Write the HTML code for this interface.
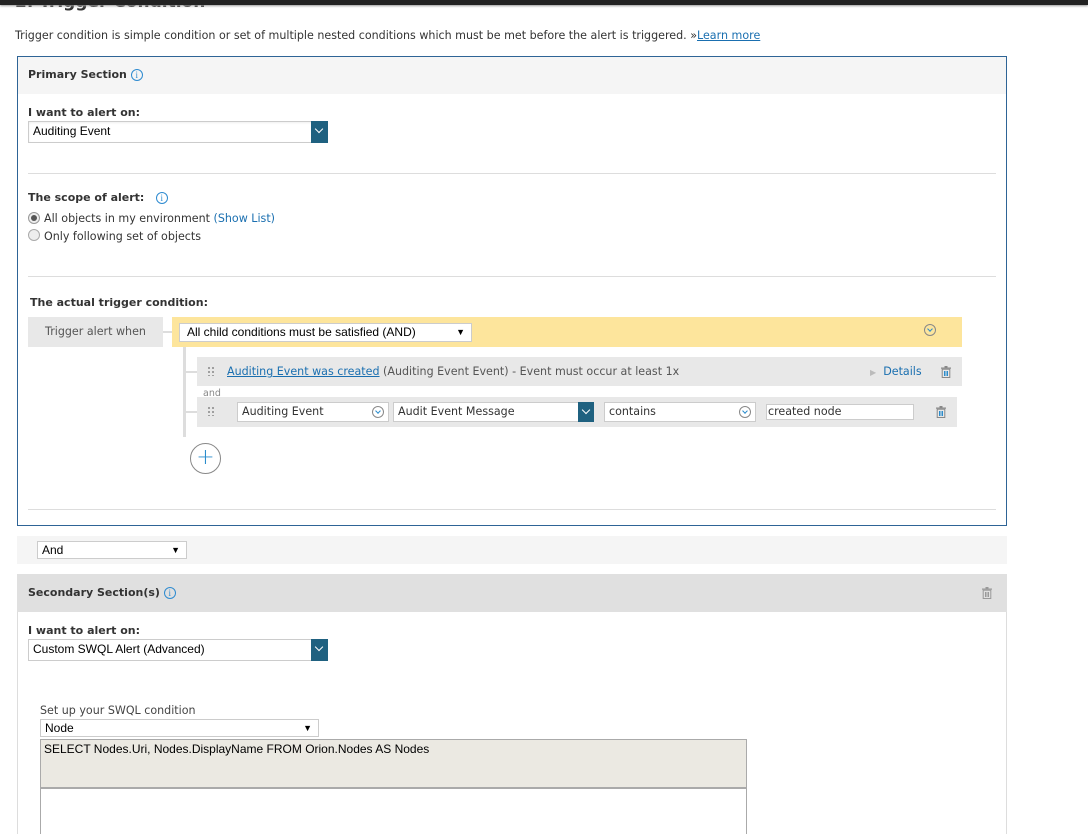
<!DOCTYPE html>
<html><head><meta charset="utf-8"><style>
*{box-sizing:border-box;margin:0;padding:0}
html,body{width:1088px;height:834px;overflow:hidden}
body{position:relative;background:#fff;font-family:"DejaVu Sans","Liberation Sans",sans-serif;font-size:11.5px;color:#333}
.a{position:absolute;white-space:nowrap}
.b{font-weight:bold;font-size:11px;color:#333}
.sel{position:absolute;background:#fff;border:1px solid #ccc;font-family:"Liberation Sans",sans-serif;font-size:12px;color:#000;padding:2px 4px;white-space:nowrap}
.dd{position:absolute;right:-1px;top:-1px;bottom:-1px;width:17px;background:#1f6180}
.dd:after{content:"";position:absolute;left:5px;top:5px;width:5px;height:5px;border-right:1px solid #fff;border-bottom:1px solid #fff;transform:rotate(45deg)}
.tri{position:absolute;right:6px;top:3px;font-size:9px}
.info{display:inline-block;width:12px;height:12px;border:1px solid #2e8bd0;border-radius:50%;color:#2e8bd0;font-size:9px;line-height:10px;text-align:center;font-family:"Liberation Serif",serif;vertical-align:middle;font-weight:normal}
.hr{position:absolute;left:28px;width:968px;height:1px;background:#ddd}
.cc{position:absolute;right:4px;top:3px;width:12px;height:12px;border:1px solid #888;border-radius:50%}
.cc:after{content:"";position:absolute;left:3px;top:2px;width:3px;height:3px;border-right:1px solid #2a8ccc;border-bottom:1px solid #2a8ccc;transform:rotate(45deg)}
.trash{position:absolute;width:10px;height:12px}
.grip{position:absolute;width:8px;height:10px;background-image:radial-gradient(circle,#999 1px,transparent 1.2px);background-size:4px 4px}
.t{font-size:11.1px}
</style></head><body>
<div class="a" style="left:15px;top:-8px;font-size:17px;font-weight:bold;color:#333">2. Trigger Condition</div>
<div class="a" style="left:0;top:0;width:1088px;height:5px;background:#222;box-shadow:0 1px 2px #999"></div>
<div class="a t" style="left:15px;top:29px">Trigger condition is simple condition or set of multiple nested conditions which must be met before the alert is triggered. »<span style="color:#1a6fb0;text-decoration:underline">Learn more</span></div>

<div class="a" style="left:17px;top:56px;width:990px;height:470px;border:1px solid #2e6496"></div>
<div class="a" style="left:18px;top:57px;width:988px;height:37px;background:#f5f5f5"></div>
<div class="a b" style="left:28px;top:68px">Primary Section <span class="info">i</span></div>
<div class="a b" style="left:28px;top:106px">I want to alert on:</div>
<div class="sel" style="left:28px;top:121px;width:300px;height:22px;box-shadow:inset 0 1px 2px #eee">Auditing Event<div class="dd"></div></div>
<div class="hr" style="top:173px"></div>
<div class="a b" style="left:28px;top:191px">The scope of alert: &nbsp;&nbsp;<span class="info">i</span></div>
<div class="a" style="left:28px;top:212px;width:12px;height:12px;border:1px solid #999;border-radius:50%;background:#eee"><div style="margin:2px;width:6px;height:6px;border-radius:50%;background:#555"></div></div>
<div class="a t" style="left:44px;top:212px">All objects in my environment <span style="color:#1a6fb0">(Show List)</span></div>
<div class="a" style="left:28px;top:229px;width:12px;height:12px;border:1px solid #aaa;border-radius:50%;background:#eee"></div>
<div class="a t" style="left:44px;top:230px">Only following set of objects</div>
<div class="hr" style="top:276px"></div>
<div class="a b" style="left:30px;top:296px">The actual trigger condition:</div>
<div class="a t" style="left:28px;top:317px;width:135px;height:30px;background:#e8e8e8;text-align:center;line-height:30px;color:#555">Trigger alert when</div>
<div class="a" style="left:163px;top:331px;width:10px;height:2px;background:#ddd"></div>
<div class="a" style="left:172px;top:317px;width:790px;height:30px;background:#fde59c"></div>
<div class="sel" style="left:179px;top:323px;width:293px;height:19px;padding:1px 7px">All child conditions must be satisfied (AND)<span class="tri">▼</span></div>
<div class="cc" style="left:924px;top:324px;right:auto"></div>
<div class="a" style="left:183px;top:347px;width:3px;height:90px;background:#ddd"></div>
<div class="a" style="left:186px;top:371px;width:11px;height:2px;background:#ddd"></div>
<div class="a" style="left:186px;top:411px;width:11px;height:2px;background:#ddd"></div>
<div class="a" style="left:197px;top:357px;width:765px;height:29px;background:#e8e8e8"></div>
<div class="grip" style="left:207px;top:366px"></div>
<div class="a t" style="left:227px;top:365px;color:#555"><span style="color:#1a6fb0;text-decoration:underline">Auditing Event was created</span> (Auditing Event Event) - Event must occur at least 1x</div>
<div class="a t" style="left:870px;top:365px;color:#1a6fb0"><span style="color:#bbb;font-size:8px">▶</span> &nbsp;Details</div>
<svg class="trash" style="left:941px;top:366px" viewBox="0 0 10 12"><rect x="0" y="1.5" width="10" height="1.2" fill="#888"/><rect x="3.5" y="0" width="3" height="1.5" fill="#888"/><rect x="1.2" y="3.2" width="7.6" height="8.3" fill="none" stroke="#888"/><path d="M3.5 5v5M5 5v5M6.5 5v5" stroke="#2a8ccc"/></svg>
<div class="a" style="left:203px;top:388px;font-size:9.5px;color:#888">and</div>
<div class="a" style="left:197px;top:397px;width:760px;height:30px;background:#e8e8e8"></div>
<div class="grip" style="left:207px;top:406px"></div>
<div class="sel t" style="left:237px;top:402px;width:152px;height:20px;font-family:'DejaVu Sans',sans-serif;color:#333">Auditing Event<div class="cc"></div></div>
<div class="sel t" style="left:393px;top:402px;width:201px;height:20px;font-family:'DejaVu Sans',sans-serif;color:#333">Audit Event Message<div class="dd" style="width:16px"></div></div>
<div class="sel t" style="left:604px;top:402px;width:152px;height:20px;font-family:'DejaVu Sans',sans-serif;color:#333">contains<div class="cc"></div></div>
<div class="sel t" style="left:766px;top:404px;width:148px;height:16px;padding:0 1px;font-family:'DejaVu Sans',sans-serif;color:#333">created node</div>
<svg class="trash" style="left:936px;top:406px" viewBox="0 0 10 12"><rect x="0" y="1.5" width="10" height="1.2" fill="#888"/><rect x="3.5" y="0" width="3" height="1.5" fill="#888"/><rect x="1.2" y="3.2" width="7.6" height="8.3" fill="none" stroke="#888"/><path d="M3.5 5v5M5 5v5M6.5 5v5" stroke="#2a8ccc"/></svg>
<div class="a" style="left:190px;top:443px;width:31px;height:31px;border:1px solid #888;border-radius:50%;text-align:center;line-height:28px;font-size:22px;color:#2a8ccc;font-weight:300">+</div>
<div class="hr" style="top:509px"></div>

<div class="a" style="left:17px;top:536px;width:990px;height:28px;background:#f5f5f5"></div>
<div class="sel" style="left:37px;top:541px;width:150px;height:18px;padding:1px 4px">And<span class="tri">▼</span></div>

<div class="a" style="left:17px;top:574px;width:990px;height:270px;border:1px solid #ddd"></div>
<div class="a" style="left:17px;top:574px;width:990px;height:38px;background:#e0e0e0"></div>
<div class="a b" style="left:28px;top:586px">Secondary Section(s) <span class="info">i</span></div>
<svg class="trash" style="left:982px;top:587px" viewBox="0 0 10 12"><rect x="0" y="1.5" width="10" height="1.2" fill="#999"/><rect x="3.5" y="0" width="3" height="1.5" fill="#999"/><rect x="1.2" y="3.2" width="7.6" height="8.3" fill="none" stroke="#999"/><path d="M3.5 5v5M5 5v5M6.5 5v5" stroke="#999"/></svg>
<div class="a b" style="left:28px;top:624px">I want to alert on:</div>
<div class="sel" style="left:28px;top:639px;width:300px;height:22px">Custom SWQL Alert (Advanced)<div class="dd"></div></div>
<div class="a t" style="left:40px;top:704px;color:#444">Set up your SWQL condition</div>
<div class="sel" style="left:40px;top:719px;width:279px;height:18px;padding:1px 4px">Node<span class="tri">▼</span></div>
<div class="a" style="left:40px;top:739px;width:707px;height:49px;background:#ebe9e2;border:1px solid #aaa;font-family:'Liberation Sans',sans-serif;font-size:12px;color:#000;padding:2px 3px">SELECT Nodes.Uri, Nodes.DisplayName FROM Orion.Nodes AS Nodes</div>
<div class="a" style="left:40px;top:787px;width:707px;height:60px;border:1px solid #aaa;border-top:2px solid #aaa"></div>
</body></html>
